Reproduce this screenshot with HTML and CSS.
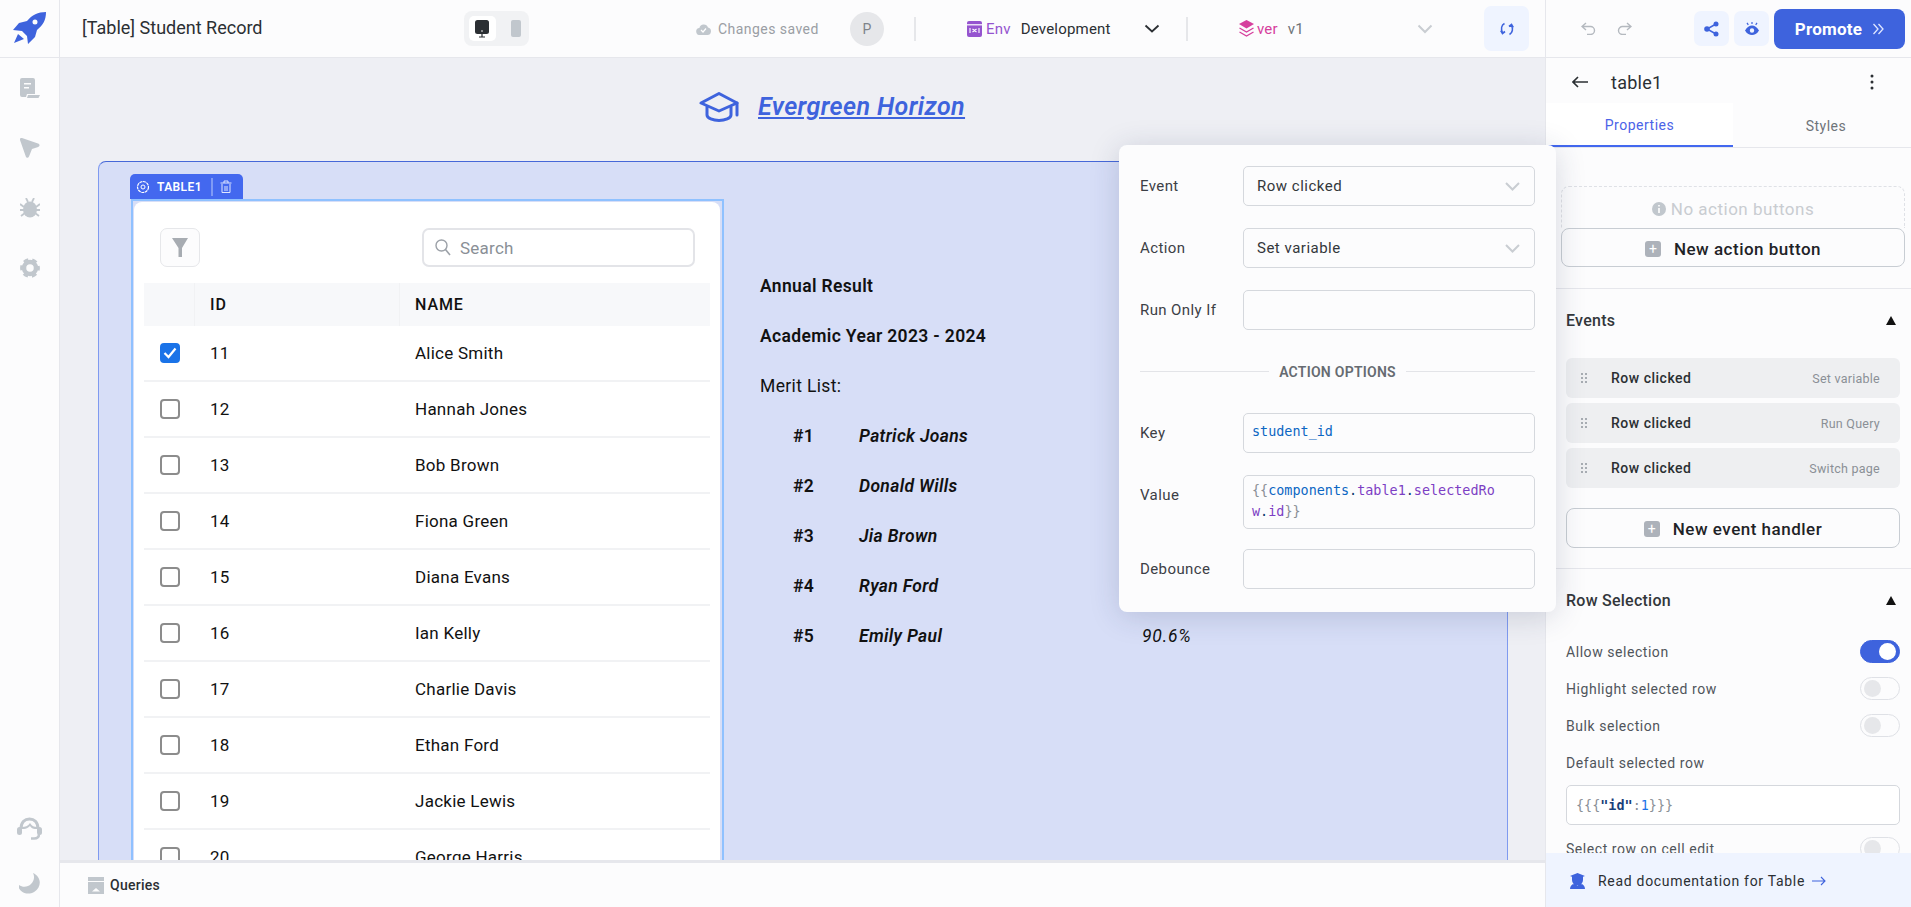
FILE: index.html
```html
<!DOCTYPE html>
<html lang="en">
<head>
<meta charset="utf-8">
<title>[Table] Student Record</title>
<link rel="stylesheet" href="styles.css">
</head>
<body>
<div class="app">
  <header class="topbar">
    <div class="logo-cell">
      <svg width="33" height="33" viewBox="0 0 33 33"><path fill="#3e63dd" fill-rule="evenodd" d="M33 0C25 0 19 3 14 9L6 11 0 18l9 1 5 5 1 8 7-7 2-7c6-5 9-10 9-18zM22 7.500a2.500 2.500 0 1 1 0 5 2.500 2.500 0 0 1 0-5zM5 22l6 5-10 4z"/></svg>
    </div>
    <div class="topbar-main">
      <div class="page-title">[Table] Student Record</div>
      <div class="device-toggle">
        <span class="device active"><svg width="14" height="18" viewBox="0 0 14 18"><rect width="14" height="14" rx="2.500" fill="#2b2f33"/><path d="M7 14v3M4 17h6" stroke="#2b2f33" stroke-width="1.200"/><circle cx="7" cy="11" r=".8" fill="#fff"/></svg></span>
        <span class="device"><svg width="10" height="17" viewBox="0 0 10 17"><rect width="10" height="17" rx="2" fill="#c1c7cd"/></svg></span>
      </div>
      <div class="save-state">
        <svg width="15" height="12" viewBox="0 0 15 12"><path fill="#c1c7cd" d="M4 12a3.500 3.500 0 0 1-.6-7A4.500 4.500 0 0 1 12 4.500 3.800 3.800 0 0 1 11 12z"/><path d="M5 7l2 2 3-3.500" stroke="#fff" stroke-width="1.200" fill="none"/></svg>
        <span>Changes saved</span>
      </div>
      <div class="avatar">P</div>
      <div class="bar-divider"></div>
      <div class="env">
        <svg width="15" height="16" viewBox="0 0 15 16"><rect width="15" height="16" rx="2" fill="#9554cf"/><rect y="3.200" width="15" height="1.200" fill="#fff"/><path d="M3 7v5M12 7v5M5.500 8l4 3M9.500 8l-4 3" stroke="#fff" stroke-width="1.100"/></svg>
        <span class="env-label">Env</span>
        <span class="env-value">Development</span>
      </div>
      <svg class="chev-dark" width="16" height="9" viewBox="0 0 16 9"><path d="M1.500 1.500L8 7.500l6.500-6" fill="none" stroke="#2b2f33" stroke-width="1.800"/></svg>
      <div class="bar-divider second"></div>
      <div class="ver">
        <svg width="15" height="17" viewBox="0 0 15 17"><path fill="#d63f9d" d="M7.500 0L15 4 7.500 8.500 0 4z"/><path d="M.5 8l7 4 7-4M.5 12l7 4 7-4" fill="none" stroke="#d63f9d" stroke-width="1.300"/></svg>
        <span class="ver-label">ver</span>
        <span class="ver-value">v1</span>
      </div>
      <svg class="chev-light" width="16" height="10" viewBox="0 0 16 10"><path d="M1.500 1.500L8 8l6.500-6.500" fill="none" stroke="#c9cdd2" stroke-width="2"/></svg>
      <button class="sync-btn"><svg width="14" height="14" viewBox="0 0 14 14"><path d="M4.500 1.500C1.500 3 .8 7 2.500 11M9.500 12.500C12.500 11 13.200 7 11.500 3M.8 8.500l1.700 3 2.500-2M13.200 5.500l-1.700-3-2.500 2" fill="none" stroke="#3e63dd" stroke-width="1.700"/></svg></button>
    </div>
    <div class="topbar-right">
      <svg class="undo" width="15" height="13" viewBox="0 0 15 13"><path d="M5 1L1 4.500 5 8M1 4.500h8.500a4 4 0 0 1 0 8H6" fill="none" stroke="#b4b9bf" stroke-width="1.400"/></svg>
      <svg class="redo" width="15" height="13" viewBox="0 0 15 13"><path d="M10 1l4 3.500L10 8M14 4.500H5.500a4 4 0 0 0 0 8H9" fill="none" stroke="#b4b9bf" stroke-width="1.400"/></svg>
      <button class="icon-btn share"><svg width="15" height="16" viewBox="0 0 15 16"><circle cx="12" cy="3" r="2.500" fill="#3e63dd"/><circle cx="3" cy="8" r="2.800" fill="#3e63dd"/><circle cx="12" cy="13" r="2.500" fill="#3e63dd"/><path d="M12 3L3 8l9 5" fill="none" stroke="#3e63dd" stroke-width="1.500"/></svg></button>
      <button class="icon-btn"><svg width="14" height="13" viewBox="0 0 14 13"><path fill="#3e63dd" fill-rule="evenodd" d="M0 8.500C2 5 4.500 3.500 7 3.500S12 5 14 8.500C12 12 9.500 13 7 13S2 12 0 8.500zM7 6.300a2.200 2.200 0 1 0 0 4.400 2.200 2.200 0 0 0 0-4.400z"/><path d="M7 0v2M2 .8l1.300 2M12 .8l-1.300 2" stroke="#3e63dd" stroke-width="1.200"/></svg></button>
      <button class="promote">Promote <svg width="12" height="12" viewBox="0 0 12 12"><path d="M1.500 1l4.500 5-4.500 5M6.500 1l4.500 5-4.500 5" fill="none" stroke="#dfe6ff" stroke-width="1.300"/></svg></button>
    </div>
  </header>

  <div class="workspace">
    <nav class="rail">
      <div class="rail-top">
        <svg width="20" height="20" viewBox="0 0 20 20"><path fill="#c1c7cd" fill-rule="evenodd" d="M2 0h11a2 2 0 0 1 2 2v14H7l-1 3H2a2 2 0 0 1-2-2V2a2 2 0 0 1 2-2zm2 5v1.500h7V5zm0 4v1.500h5V9z"/><path fill="#c1c7cd" d="M8 17h12l-1.500 3H7z"/></svg>
        <svg width="20" height="20" viewBox="0 0 20 20"><path fill="#c1c7cd" d="M2 0l16 5.500c2 .8 2 2.600.2 3.400L12 11l-3 7.500c-.8 1.800-2.500 1.800-3.200 0L0 2C-.4.600.8-.4 2 0z"/></svg>
        <svg width="20" height="20" viewBox="0 0 20 20"><ellipse cx="10" cy="11.500" rx="7" ry="8" fill="#c1c7cd"/><path d="M6 0l2 4M14 0l-2 4M0 6l4 3M20 6l-4 3M0 12h4M20 12h-4M1 18l4-3M19 18l-4-3" stroke="#c1c7cd" stroke-width="1.800"/></svg>
        <svg width="20" height="20" viewBox="0 0 20 20"><circle cx="10" cy="10" r="6" fill="none" stroke="#c1c7cd" stroke-width="4.500"/><circle cx="10" cy="10" r="8.400" fill="none" stroke="#c1c7cd" stroke-width="3" stroke-dasharray="4.800 4" stroke-dashoffset="2.400"/></svg>
      </div>
      <div class="rail-bottom">
        <svg width="25" height="23" viewBox="0 0 25 23"><path fill="none" stroke="#c1c7cd" stroke-width="3" d="M4 12C4 5 8 2 12.500 2S21 5 21 12"/><rect y="10" width="5" height="8" rx="2.500" fill="#c1c7cd"/><rect x="20" y="10" width="5" height="8" rx="2.500" fill="#c1c7cd"/><path fill="none" stroke="#c1c7cd" stroke-width="2.500" d="M22 17c0 3-2 4.500-5 4.500h-3"/><path fill="#c1c7cd" d="M5 10c3 0 6-1 8-4 2 3 4 4 7 4v2h-2c-2 0-4-1-5-3-2 2-4 3-6 3H5z"/></svg>
        <svg width="21" height="21" viewBox="0 0 21 21"><path fill="#c1c7cd" d="M14 0c6 2.500 8.500 9 5.500 14.500S9 22.500 3.500 19 0 12 0 12c4 3 9 2 12-1s4-7 2-11z"/></svg>
      </div>
    </nav>

    <main class="center">
      <div class="canvas">
        <div class="brand">
          <svg width="40" height="30" viewBox="0 0 40 30"><path d="M20 1.500L38 11 20 19 2 11z" fill="none" stroke="#3e63dd" stroke-width="3" stroke-linejoin="round"/><path d="M8 15v8c0 3 6 5.500 12 5.500S32 26 32 23v-8M38 11v12" fill="none" stroke="#3e63dd" stroke-width="3" stroke-linecap="round"/></svg>
          <a class="brand-name">Evergreen Horizon</a>
        </div>
        <section class="sheet">
          <div class="selection">
            <div class="widget-tag">
              <svg width="14" height="14" viewBox="0 0 14 14"><circle cx="7" cy="7" r="2" fill="none" stroke="#fff"/><circle cx="7" cy="7" r="5.500" fill="none" stroke="#fff" stroke-width="1.200" stroke-dasharray="3 .6"/></svg>
              <span>TABLE1</span>
              <i></i>
              <svg width="12" height="14" viewBox="0 0 12 14"><path d="M2 4v8.500h8V4M.5 3h11M4 3V1h4v2M5 6v5M7 6v5" fill="none" stroke="#dfe6ff"/></svg>
            </div>
            <div class="card">
              <div class="toolbar">
                <button class="filter-btn"><svg width="16" height="21" viewBox="0 0 16 21"><path fill="#a7acb2" d="M0 1h16L10 11v9H6.500V11z"/></svg></button>
                <div class="search">
                  <svg width="16" height="17" viewBox="0 0 16 17"><circle cx="6.500" cy="6.500" r="5.500" fill="none" stroke="#9ca1a8" stroke-width="1.400"/><path d="M10.500 10.500L15 16" stroke="#9ca1a8" stroke-width="1.600"/></svg>
                  <span>Search</span>
                </div>
              </div>
              <div class="tbl">
                <div class="tr head"><div></div><div>ID</div><div>NAME</div></div>
                <div class="tr"><div><span class="check on"><svg width="14" height="12" viewBox="0 0 14 12"><path d="M1.500 6l4 4 7-8.500" fill="none" stroke="#fff" stroke-width="2.200"/></svg></span></div><div>11</div><div>Alice Smith</div></div>
                <div class="tr"><div><span class="check"></span></div><div>12</div><div>Hannah Jones</div></div>
                <div class="tr"><div><span class="check"></span></div><div>13</div><div>Bob Brown</div></div>
                <div class="tr"><div><span class="check"></span></div><div>14</div><div>Fiona Green</div></div>
                <div class="tr"><div><span class="check"></span></div><div>15</div><div>Diana Evans</div></div>
                <div class="tr"><div><span class="check"></span></div><div>16</div><div>Ian Kelly</div></div>
                <div class="tr"><div><span class="check"></span></div><div>17</div><div>Charlie Davis</div></div>
                <div class="tr"><div><span class="check"></span></div><div>18</div><div>Ethan Ford</div></div>
                <div class="tr"><div><span class="check"></span></div><div>19</div><div>Jackie Lewis</div></div>
                <div class="tr"><div><span class="check"></span></div><div>20</div><div>George Harris</div></div>
              </div>
            </div>
          </div>
          <div class="result">
            <p class="strong">Annual Result</p>
            <p class="strong">Academic Year 2023 - 2024</p>
            <p>Merit List:</p>
            <div class="merit"><b>#1</b><em>Patrick Joans</em><span></span></div>
            <div class="merit"><b>#2</b><em>Donald Wills</em><span></span></div>
            <div class="merit"><b>#3</b><em>Jia Brown</em><span></span></div>
            <div class="merit"><b>#4</b><em>Ryan Ford</em><span></span></div>
            <div class="merit"><b>#5</b><em>Emily Paul</em><span>90.6%</span></div>
          </div>
        </section>
      </div>
      <div class="querybar">
        <svg width="16" height="17" viewBox="0 0 16 17"><rect width="16" height="4" fill="#c1c7cd"/><path fill="#c1c7cd" fill-rule="evenodd" d="M0 5h16v12H0zm8 6l-4 3.500h8z"/></svg>
        <span>Queries</span>
      </div>
    </main>

    <aside class="panel">
      <div class="panel-title">
        <svg width="16" height="12" viewBox="0 0 16 12"><path d="M6 1L1 6l5 5M1 6h15" fill="none" stroke="#2b2f33" stroke-width="1.600"/></svg>
        <span>table1</span>
        <svg class="kebab" width="4" height="16" viewBox="0 0 4 16"><circle cx="2" cy="2" r="1.500" fill="#2b2f33"/><circle cx="2" cy="8" r="1.500" fill="#2b2f33"/><circle cx="2" cy="14" r="1.500" fill="#2b2f33"/></svg>
      </div>
      <div class="tabs">
        <div class="tab active">Properties</div>
        <div class="tab">Styles</div>
      </div>
      <div class="action-block">
        <div class="no-actions"><svg width="14" height="14" viewBox="0 0 14 14"><circle cx="7" cy="7" r="7" fill="#c1c7cd"/><path d="M7 6v5M7 3v1.600" stroke="#fff" stroke-width="1.600"/></svg><span>No action buttons</span></div>
        <button class="add-btn"><span class="plus">+</span><span>New action button</span></button>
      </div>
      <div class="section events">
        <div class="section-head"><span>Events</span><i class="caret"></i></div>
        <div class="event-row"><span class="grip"></span><span class="ev-name">Row clicked</span><span class="ev-act">Set variable</span></div>
        <div class="event-row"><span class="grip"></span><span class="ev-name">Row clicked</span><span class="ev-act">Run Query</span></div>
        <div class="event-row"><span class="grip"></span><span class="ev-name">Row clicked</span><span class="ev-act">Switch page</span></div>
        <button class="add-btn handler"><span class="plus">+</span><span>New event handler</span></button>
      </div>
      <div class="section selection-sec">
        <div class="section-head"><span>Row Selection</span><i class="caret"></i></div>
        <div class="opt"><span>Allow selection</span><i class="switch on"></i></div>
        <div class="opt"><span>Highlight selected row</span><i class="switch"></i></div>
        <div class="opt"><span>Bulk selection</span><i class="switch"></i></div>
        <div class="opt field-title"><span>Default selected row</span></div>
        <div class="code-input"><span class="c-gray">{{{</span><span class="c-navy">"id"</span><span class="c-gray">:</span><span class="c-blue">1</span><span class="c-gray">}}}</span></div>
        <div class="opt last"><span>Select row on cell edit</span><i class="switch"></i></div>
      </div>
      <div class="docs">
        <svg width="15" height="16" viewBox="0 0 15 16"><path fill="#3e63dd" d="M7.500 0L15 3l-2 .8V7a5.500 5.500 0 0 1-11 0V3.800L0 3zM0 16c0-3 2-5 4-5l3.500 2L11 11c2 0 4 2 4 5z"/></svg>
        <span>Read documentation for Table</span>
        <svg width="14" height="10" viewBox="0 0 14 10"><path d="M9 1l4 4-4 4M0 5h13" fill="none" stroke="#3e63dd" stroke-width="1.100"/></svg>
      </div>
    </aside>

    <div class="popover">
      <div class="field-row"><label>Event</label><div class="field select">Row clicked<svg width="15" height="9" viewBox="0 0 15 9"><path d="M1 1l6.500 6.500L14 1" fill="none" stroke="#c9cdd2" stroke-width="2"/></svg></div></div>
      <div class="field-row"><label>Action</label><div class="field select">Set variable<svg width="15" height="9" viewBox="0 0 15 9"><path d="M1 1l6.500 6.500L14 1" fill="none" stroke="#c9cdd2" stroke-width="2"/></svg></div></div>
      <div class="field-row"><label>Run Only If</label><div class="field"></div></div>
      <div class="options-sep"><span>ACTION OPTIONS</span></div>
      <div class="field-row"><label>Key</label><div class="field code"><span class="c-key">student_id</span></div></div>
      <div class="field-row value-row"><label>Value</label><div class="field code tall"><span class="c-gray">{{</span><span class="c-key">components</span><span class="c-dark">.</span><span class="c-purple">table1</span><span class="c-dark">.</span><span class="c-purple">selectedRo<br>w</span><span class="c-dark">.</span><span class="c-purple">id</span><span class="c-gray">}}</span></div></div>
      <div class="field-row"><label>Debounce</label><div class="field"></div></div>
    </div>
  </div>
</div>
</body>
</html>
```

FILE: styles.css
```css
* { box-sizing: border-box; }
html, body { margin: 0; height: 100%; overflow: hidden; }
body { font-family: "Roboto", "Liberation Sans", sans-serif; letter-spacing: .25px; color: #2b2f33; background: #fcfcfd; }
button { font: inherit; letter-spacing: inherit; border: 0; padding: 0; cursor: pointer; }
p { margin: 0; }

.app { display: flex; flex-direction: column; width: 1911px; height: 907px; }

/* top bar */
.topbar { display: flex; height: 58px; flex: none; background: #fcfcfd; border-bottom: 1px solid #e6e7ec; }
.logo-cell { width: 60px; display: flex; align-items: center; padding-left: 13px; border-right: 1px solid #e6e7ec; }
.topbar-main { width: 1486px; display: flex; align-items: center; border-right: 1px solid #e6e7ec; }
.page-title { width: 404px; padding: 0 0 2px 22px; font-size: 18px; letter-spacing: 0; color: #2b2f33; }
.device-toggle { width: 65px; height: 35px; background: #f1f2f4; border-radius: 8px; display: flex; align-items: center; padding-left: 5px; gap: 7px; }
.device { width: 27px; height: 25px; display: flex; align-items: center; justify-content: center; }
.device.active { background: #fff; border-radius: 5px; }
.save-state { display: flex; align-items: center; gap: 7px; margin-left: 167px; font-size: 14px; letter-spacing: .45px; color: #9a9ea4; width: 154px; }
.avatar { width: 34px; height: 34px; border-radius: 50%; background: #e6e7ea; color: #7e8389; font-size: 14px; display: flex; align-items: center; justify-content: center; }
.bar-divider { width: 2px; height: 24px; background: #e6e7ea; margin-left: 30px; }
.bar-divider.second { margin-left: 26px; }
.env { display: flex; align-items: center; margin-left: 51px; font-size: 15px; letter-spacing: .2px; width: 177px; }
.env-label { color: #9554cf; margin-left: 4px; }
.env-value { margin-left: 10px; color: #2b2f33; }
.ver { display: flex; align-items: center; margin-left: 51px; font-size: 15px; letter-spacing: .2px; width: 178px; }
.ver-label { color: #d63f9d; margin-left: 3px; }
.ver-value { margin-left: 10px; color: #6f747a; }
.sync-btn { width: 45px; height: 45px; margin-left: 51px; background: #eff4ff; border-radius: 7px; display: flex; align-items: center; justify-content: center; }
.topbar-right { flex: 1; display: flex; align-items: center; padding-left: 35px; }
.redo { margin-left: 21px; }
.icon-btn { width: 35px; height: 35px; background: #eff4ff; border-radius: 7px; display: flex; align-items: center; justify-content: center; margin-left: 5px; }
.icon-btn.share { margin-left: 62px; }
.promote { width: 131px; height: 40px; margin-left: 5px; background: #3e63dd; color: #fff; font-size: 17px; font-weight: 700; border-radius: 8px; display: flex; align-items: center; justify-content: center; gap: 10px; }

/* body */
.workspace { position: relative; display: flex; flex: 1; min-height: 0; }
.rail { width: 60px; flex: none; border-right: 1px solid #e6e7ec; background: #fcfcfd; display: flex; flex-direction: column; justify-content: space-between; align-items: center; padding: 20px 0 13px; }
.rail-top { display: flex; flex-direction: column; gap: 40px; }
.rail-bottom { display: flex; flex-direction: column; align-items: center; gap: 33px; }

.center { width: 1486px; flex: none; display: flex; flex-direction: column; border-right: 1px solid #e6e7ec; }
.canvas { flex: 1; min-height: 0; overflow: hidden; background: #eeeff4; }
.brand { height: 103px; padding: 34px 0 0 639px; display: flex; align-items: flex-start; gap: 19px; }
.brand-name { font-size: 25px; font-weight: 600; font-style: italic; color: #3e63dd; text-decoration: underline; line-height: 30px; letter-spacing: .4px; }

.sheet { position: relative; margin-left: 38px; width: 1410px; height: 900px; background: #d7def7; border: 1px solid #7f9af0; border-top-color: #4668d8; border-radius: 8px 8px 0 0; padding: 37px 0 0 32px; display: flex; align-items: flex-start; }
.selection { position: relative; width: 593px; flex: none; border: 2px solid #8fc1ff; padding: 1px 2px 1px 1px; }
.widget-tag { position: absolute; left: -3px; top: -27px; width: 113px; height: 25px; background: #4368ef; border-radius: 5px 5px 0 0; color: #fff; font-size: 12px; font-weight: 600; letter-spacing: .4px; display: flex; align-items: center; padding-left: 6px; }
.widget-tag span { margin-left: 7px; }
.widget-tag i { width: 2px; height: 18px; background: #7f9af5; margin: 0 7px 0 9px; }
.card { background: #fff; border-radius: 8px 8px 0 0; padding: 26px 10px 0; }
.toolbar { display: flex; justify-content: space-between; padding: 0 15px 0 16px; height: 39px; margin-bottom: 16px; }
.filter-btn { width: 40px; height: 39px; background: #fcfcfd; border: 1.500px solid #e6e7ea; border-radius: 7px; display: flex; align-items: center; justify-content: center; }
.search { width: 273px; height: 39px; border: 2px solid #e3e4e8; border-radius: 7px; display: flex; align-items: center; padding-left: 11px; gap: 9px; font-size: 17px; color: #8a8f96; }
.tr { display: grid; grid-template-columns: 50px 205px 1fr; height: 56px; align-items: center; font-size: 17px; color: #111; border-bottom: 2px solid #f1f2f4; }
.tr > div { padding: 0 0 1px 16px; height: 100%; display: flex; align-items: center; }
.tr.head { height: 43px; background: #f7f8fa; font-size: 16px; font-weight: 500; letter-spacing: .9px; border-bottom: 0; }
.tr.head > div + div { box-shadow: inset 1px 0 0 #f1f2f4; }
.check { width: 20px; height: 20px; border: 2px solid #8c8c8c; border-radius: 4px; display: flex; align-items: center; justify-content: center; }
.check.on { background: #1a73e8; border-color: #1a73e8; }

.result { margin: 62px 0 0 36px; font-size: 17.500px; letter-spacing: .35px; line-height: 50px; color: #111; }
.strong { font-weight: 600; }
.merit { display: grid; grid-template-columns: 66px 283px auto; padding-left: 33px; }
.merit b { font-weight: 600; }
.merit em { font-weight: 600; }
.merit span { font-style: italic; letter-spacing: .8px; }

.querybar { height: 47px; flex: none; border-top: 3px solid #e6e7ec; background: #fcfcfd; display: flex; align-items: center; gap: 6px; padding-left: 28px; font-size: 14px; font-weight: 500; color: #2b2f33; }

/* right panel */
.panel { flex: 1; min-width: 0; position: relative; background: #fcfcfd; overflow: hidden; display: flex; flex-direction: column; }
.panel-title { height: 45px; flex: none; display: flex; align-items: center; padding: 3px 0 0 26px; font-size: 18px; }
.panel-title span { margin-left: 23px; }
.kebab { margin-left: auto; margin-right: 37px; }
.tabs { height: 45px; flex: none; display: flex; border-bottom: 1px solid #e6e7ec; font-size: 14px; letter-spacing: .5px; color: #6f747a; }
.tab { width: 187px; text-align: center; line-height: 44px; flex: none; }
.tab + .tab { width: 178px; padding: 1px 0 0 8px; }
.tab.active { background: #fff; color: #4b63e8; box-shadow: inset 0 -2px 0 #4368ef; }
.action-block { flex: none; padding: 38px 6px 21px 15px; border-bottom: 1px solid #e6e7ec; }
.no-actions { height: 42px; border: 1px dashed #dfe1e6; border-bottom: 0; border-radius: 8px 8px 0 0; display: flex; align-items: center; justify-content: center; gap: 5px; padding-top: 2px; font-size: 17px; letter-spacing: .5px; color: #c9ccd1; }
.add-btn { width: 100%; height: 39px; background: #fcfcfd; border: 1px solid #c8cdd3; border-radius: 8px; font-size: 17px; font-weight: 500; letter-spacing: .5px; color: #1f2327; display: flex; align-items: center; justify-content: center; gap: 13px; padding-top: 2px; }
.plus { width: 16px; height: 16px; background: #adb2ba; border-radius: 3px; color: #fff; font-size: 14px; font-weight: 400; line-height: 16px; text-align: center; letter-spacing: 0; }
.section { flex: none; padding: 0 11px 0 20px; }
.section-head { height: 24px; display: flex; align-items: center; justify-content: space-between; font-size: 16px; font-weight: 500; color: #33373b; }
.caret { width: 0; height: 0; border-left: 5.500px solid transparent; border-right: 5.500px solid transparent; border-bottom: 9px solid #111; margin-right: 4px; }
.events { padding-top: 19px; padding-bottom: 20px; border-bottom: 1px solid #e6e7ec; }
.events .section-head { margin-bottom: 26px; }
.event-row { height: 40px; margin-bottom: 5px; background: #eeeff1; border-radius: 6px; display: flex; align-items: center; padding: 0 20px 0 14px; }
.grip { width: 8px; height: 12px; margin-right: 23px; background-image: radial-gradient(circle, #a7acb2 1.100px, transparent 1.300px); background-size: 4px 4px; }
.ev-name { font-size: 14px; font-weight: 500; letter-spacing: .5px; color: #2b2f33; }
.ev-act { margin-left: auto; font-size: 12.500px; color: #8a8f96; }
.add-btn.handler { margin-top: 20px; height: 40px; }
.selection-sec { padding-top: 19px; }
.selection-sec .section-head { margin-bottom: 28px; }
.opt { height: 23px; margin-bottom: 14px; display: flex; align-items: center; justify-content: space-between; font-size: 14px; letter-spacing: .55px; color: #50555b; }
.opt.field-title { margin-bottom: 11px; }
.switch { width: 40px; height: 23px; border: 1px solid #dfe1e6; border-radius: 12px; position: relative; }
.switch::after { content: ""; position: absolute; left: 3px; top: 2px; width: 17px; height: 17px; border-radius: 50%; background: #e6e7ea; }
.switch.on { background: #3e63dd; border-color: #3e63dd; }
.switch.on::after { left: auto; right: 3px; background: #fff; }
.code-input { height: 40px; margin-bottom: 12px; padding-left: 9px; background: #fff; border: 1px solid #d5d8dd; border-radius: 5px; display: flex; align-items: center; font-family: "DejaVu Sans Mono", monospace; font-size: 13.450px; letter-spacing: 0; font-weight: 700; }
.docs { position: absolute; left: 0; right: 0; bottom: 0; height: 54px; background: #eff4ff; display: flex; align-items: center; padding: 1px 0 0 24px; font-size: 14px; letter-spacing: .7px; color: #2b2f33; }
.docs span { margin: 0 7px 0 13px; }
.c-gray { color: #8a8f96; font-weight: 400; }
.c-navy { color: #1a3f7a; }
.c-blue { color: #1a73e8; font-weight: 400; }
.c-key { color: #0b66c3; }
.c-purple { color: #7c3fc4; }
.c-dark { color: #0b3a6e; }

/* popover */
.popover { position: absolute; left: 1119px; top: 87px; width: 437px; height: 467px; background: #fcfcfd; border-radius: 8px; box-shadow: 0 4px 30px rgba(40, 50, 90, .18); padding: 21px 21px 0; z-index: 5; }
.field-row { display: grid; grid-template-columns: 103px 292px; align-items: center; margin-bottom: 22px; }
.field-row label { font-size: 15px; letter-spacing: .4px; color: #3c4046; }
.field { height: 40px; background: #fcfcfd; border: 1px solid #d5d8dd; border-radius: 5px; padding: 0 14px 0 13px; display: flex; align-items: center; justify-content: space-between; font-size: 15px; letter-spacing: .5px; color: #33373b; }
.field.code { display: block; padding: 7px 0 0 8px; font-family: "DejaVu Sans Mono", monospace; font-size: 13.450px; letter-spacing: 0; line-height: 21px; }
.field.code.tall { height: 54px; padding-top: 4px; }
.value-row { margin-bottom: 20px; }
.value-row label { align-self: start; padding-top: 11px; }
.options-sep { display: flex; align-items: center; gap: 10px; margin: 31px 0 30px; height: 22px; padding-bottom: 1px; font-size: 14px; font-weight: 600; color: #666b71; }
.options-sep::before, .options-sep::after { content: ""; flex: 1; height: 1px; background: #e3e4e8; }
```
